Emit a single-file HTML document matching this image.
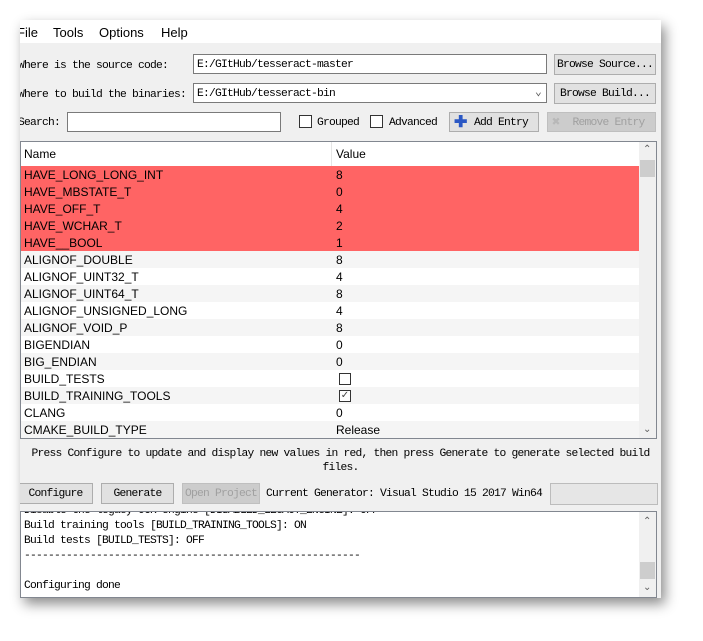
<!DOCTYPE html>
<html><head><meta charset="utf-8"><style>
body{margin:0;width:703px;height:641px;background:#fff;position:relative;overflow:hidden;font-family:"Liberation Sans",sans-serif;}
.win{position:absolute;left:20px;top:20px;width:641px;height:578px;background:#f0f0f0;box-shadow:4px 6px 12px rgba(0,0,0,.45);overflow:hidden}
.abs{position:absolute}
.mono{font-family:"Liberation Mono",monospace;font-size:11.3px;letter-spacing:-0.78px;color:#000;white-space:pre}
.menu{left:0;top:0;width:641px;height:23px;background:#fff;font-size:13px}
.menu span{position:absolute;top:5px}
.inp{background:#fff;border:1px solid #7a7a7a;box-sizing:border-box}
.btn{background:#e1e1e1;border:1px solid #adadad;box-sizing:border-box;text-align:center;line-height:21px}
.dis{color:#a0a0a0;background:#ccc;border-color:#bfbfbf}
.cb{width:12px;height:12px;border:1px solid #333;background:#fff;box-sizing:border-box}
.tbl{left:0;top:121px;width:637px;height:298px;background:#fff;border:1px solid #828790;box-sizing:border-box;overflow:hidden}
.row{position:absolute;left:0;width:618px;height:17px;font-size:12px;line-height:18px;color:#000}
.row .n{position:absolute;left:3px}
.row .v{position:absolute;left:315px}
</style></head><body>
<div class="win">
 <div class="abs menu"><span style="left:-3px">File</span><span style="left:33px">Tools</span><span style="left:79px">Options</span><span style="left:141px">Help</span></div>
 <div class="abs mono" style="left:-2px;top:40px">Where is the source code:</div>
 <div class="abs inp mono" style="left:173px;top:34px;width:354px;height:20px;padding:4px 0 0 3px">E:/GItHub/tesseract-master</div>
 <div class="abs btn mono" style="left:534px;top:34px;width:102px;height:21px">Browse Source...</div>
 <div class="abs mono" style="left:-2px;top:69px">Where to build the binaries:</div>
 <div class="abs inp mono" style="left:173px;top:63px;width:354px;height:20px;padding:4px 0 0 3px">E:/GItHub/tesseract-bin<span style="position:absolute;right:5px;top:1px;color:#555">⌄</span></div>
 <div class="abs btn mono" style="left:534px;top:63px;width:102px;height:21px">Browse Build...</div>
 <div class="abs mono" style="left:-2px;top:97px">Search:</div>
 <div class="abs inp" style="left:47px;top:92px;width:214px;height:20px"></div>
 <div class="abs cb" style="left:279px;top:95px;width:13px;height:13px"></div><div class="abs mono" style="left:297px;top:97px">Grouped</div>
 <div class="abs cb" style="left:350px;top:95px;width:13px;height:13px"></div><div class="abs mono" style="left:369px;top:97px">Advanced</div>
 <div class="abs btn mono" style="left:429px;top:92px;width:90px;height:20px;padding-left:14px;line-height:20px"><span style="position:absolute;left:4px;top:0;color:#2a57c4;font-size:16px;font-weight:bold;font-family:'Liberation Sans'">✚</span>Add Entry</div>
 <div class="abs btn mono dis" style="left:527px;top:92px;width:109px;height:20px;padding-left:14px;line-height:20px"><span style="position:absolute;left:4px;top:0;color:#b8b8b8;font-size:14px">✖</span>Remove Entry</div>
 <div class="abs tbl">
  <div class="row" style="top:0;height:24px;line-height:24px;width:618px;background:#fff;border-bottom:1px solid #e5e5e5"><span class="n">Name</span><span class="v" style="border-left:1px solid #e5e5e5;padding-left:4px;left:310px;height:24px">Value</span></div>
  <div class="row" style="top:24px;background:#ff6464"><span class="n">HAVE_LONG_LONG_INT</span><span class="v">8</span></div>
  <div class="row" style="top:41px;background:#ff6464"><span class="n">HAVE_MBSTATE_T</span><span class="v">0</span></div>
  <div class="row" style="top:58px;background:#ff6464"><span class="n">HAVE_OFF_T</span><span class="v">4</span></div>
  <div class="row" style="top:75px;background:#ff6464"><span class="n">HAVE_WCHAR_T</span><span class="v">2</span></div>
  <div class="row" style="top:92px;background:#ff6464"><span class="n">HAVE__BOOL</span><span class="v">1</span></div>
  <div class="row" style="top:109px;background:#f5f5f5"><span class="n">ALIGNOF_DOUBLE</span><span class="v">8</span></div>
  <div class="row" style="top:126px"><span class="n">ALIGNOF_UINT32_T</span><span class="v">4</span></div>
  <div class="row" style="top:143px;background:#f5f5f5"><span class="n">ALIGNOF_UINT64_T</span><span class="v">8</span></div>
  <div class="row" style="top:160px"><span class="n">ALIGNOF_UNSIGNED_LONG</span><span class="v">4</span></div>
  <div class="row" style="top:177px;background:#f5f5f5"><span class="n">ALIGNOF_VOID_P</span><span class="v">8</span></div>
  <div class="row" style="top:194px"><span class="n">BIGENDIAN</span><span class="v">0</span></div>
  <div class="row" style="top:211px;background:#f5f5f5"><span class="n">BIG_ENDIAN</span><span class="v">0</span></div>
  <div class="row" style="top:228px"><span class="n">BUILD_TESTS</span><span class="abs cb" style="left:318px;top:3px"></span></div>
  <div class="row" style="top:245px;background:#f5f5f5"><span class="n">BUILD_TRAINING_TOOLS</span><span class="abs cb" style="left:318px;top:3px;font-size:10px;line-height:10px;color:#444;text-align:center">✓</span></div>
  <div class="row" style="top:262px"><span class="n">CLANG</span><span class="v">0</span></div>
  <div class="row" style="top:279px;background:#f5f5f5"><span class="n">CMAKE_BUILD_TYPE</span><span class="v">Release</span></div>
  <div class="abs" style="left:618px;top:0;width:17px;height:296px;background:#f0f0f0"></div>
  <div class="abs" style="left:619px;top:18px;width:15px;height:17px;background:#cdcdcd"></div>
  <div class="abs" style="left:622px;top:2px;font-size:10px;color:#606060">⌃</div>
  <div class="abs" style="left:622px;top:282px;font-size:10px;color:#606060">⌄</div>
 </div>
 <div class="abs mono" style="left:0;width:641px;text-align:center;top:427px;line-height:14px;white-space:normal">Press Configure to update and display new values in red, then press Generate to generate selected build files.</div>
 <div class="abs btn mono" style="left:-2px;top:463px;width:75px;height:21px">Configure</div>
 <div class="abs btn mono" style="left:81px;top:463px;width:73px;height:21px">Generate</div>
 <div class="abs btn mono dis" style="left:162px;top:463px;width:78px;height:21px">Open Project</div>
 <div class="abs mono" style="left:246px;top:468px">Current Generator: Visual Studio 15 2017 Win64</div>
 <div class="abs" style="left:530px;top:463px;width:106px;height:20px;background:#e6e6e6;border:1px solid #bcbcbc"></div>
 <div class="abs" style="left:0;top:491px;width:637px;height:87px;background:#fff;border:1px solid #828790;box-sizing:border-box;overflow:hidden">
  <div class="abs mono" style="left:3px;top:-8px;line-height:15px">Disable the legacy OCR engine [DISABLED_LEGACY_ENGINE]: OFF
Build training tools [BUILD_TRAINING_TOOLS]: ON
Build tests [BUILD_TESTS]: OFF
--------------------------------------------------------

Configuring done</div>
  <div class="abs" style="left:618px;top:0;width:17px;height:85px;background:#f0f0f0"></div>
  <div class="abs" style="left:619px;top:50px;width:15px;height:17px;background:#cdcdcd"></div>
  <div class="abs" style="left:622px;top:4px;font-size:10px;color:#606060">⌃</div>
  <div class="abs" style="left:622px;top:70px;font-size:10px;color:#606060">⌄</div>
 </div>
</div>
</body></html>
